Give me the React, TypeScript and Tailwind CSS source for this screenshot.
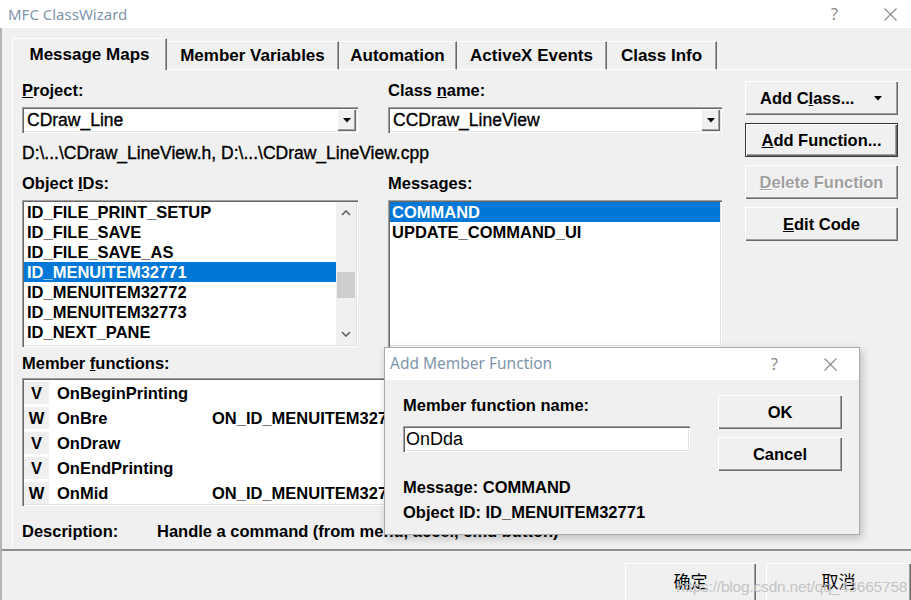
import React from "react";

// classic win32 bevels
const raised =
  "bg-[#f0f0f0] shadow-[inset_1px_1px_0_#ffffff,inset_-1px_-1px_0_#696969,inset_-2px_-2px_0_#a0a0a0]";
const sunken =
  "bg-white shadow-[inset_1px_1px_0_#a0a0a0,inset_2px_2px_0_#696969,inset_-1px_-1px_0_#ffffff,inset_-2px_-2px_0_#e3e3e3]";
const bold = "font-bold text-[16.5px] leading-[20px]";
const med = "text-[17.5px] leading-[20px] [-webkit-text-stroke:0.35px_currentcolor]";

const objectIds = [
  "ID_FILE_PRINT_SETUP",
  "ID_FILE_SAVE",
  "ID_FILE_SAVE_AS",
  "ID_MENUITEM32771",
  "ID_MENUITEM32772",
  "ID_MENUITEM32773",
  "ID_NEXT_PANE",
];

const memberFns = [
  { kind: "V", name: "OnBeginPrinting", map: "" },
  { kind: "W", name: "OnBre", map: "ON_ID_MENUITEM32771:COMMAND" },
  { kind: "V", name: "OnDraw", map: "" },
  { kind: "V", name: "OnEndPrinting", map: "" },
  { kind: "W", name: "OnMid", map: "ON_ID_MENUITEM32772:COMMAND" },
];

const tabs = [
  { label: "Message Maps", w: "w-[155px]" },
  { label: "Member Variables", w: "w-[172px]" },
  { label: "Automation", w: "w-[118px]" },
  { label: "ActiveX Events", w: "w-[150px]" },
  { label: "Class Info", w: "w-[110px]" },
];

const CloseX = ({ color = "#8a8a8a" }: { color?: string }) => (
  <svg width="13" height="13" viewBox="0 0 13 13">
    <path d="M0.5 0.5L12.5 12.5M12.5 0.5L0.5 12.5" stroke={color} strokeWidth="1.1" />
  </svg>
);

const DownTri = () => (
  <svg width="8" height="5" viewBox="0 0 8 5">
    <polygon points="0,0 8,0 4,4.5" fill="#000" />
  </svg>
);

const Combo = ({ value }: { value: string }) => (
  <div className={`${sunken} h-[26px] flex items-center pl-[5px] pr-[2px]`}>
    <span className={`${med} flex-1 text-black`}>{value}</span>
    <div className={`${raised} w-[19px] h-[22px] flex items-center justify-center`}>
      <DownTri />
    </div>
  </div>
);

const Chevron = ({ up }: { up?: boolean }) => (
  <svg width="10" height="6" viewBox="0 0 10 6">
    <polyline
      points={up ? "1,5 5,1 9,5" : "1,1 5,5 9,1"}
      fill="none"
      stroke="#606060"
      strokeWidth="1.6"
    />
  </svg>
);

const Btn = ({
  children,
  def,
  disabled,
  className = "",
}: {
  children: React.ReactNode;
  def?: boolean;
  disabled?: boolean;
  className?: string;
}) => (
  <div
    className={`${raised} ${def ? "border border-[#3a3a3a]" : ""} ${
      disabled ? "text-[#a0a0a0] [text-shadow:1px_1px_0_#ffffff]" : "text-black"
    } ${bold} flex items-center justify-center ${className}`}
  >
    {children}
  </div>
);

const App = () => {
  return (
    <div className="relative w-[911px] h-[600px] overflow-hidden bg-[#f0f0f0] font-['Liberation_Sans','Noto_Sans_CJK_SC',sans-serif] text-black">
      {/* title bar */}
      <div className="h-[28px] bg-white flex items-center pl-[8px] pr-[14px]">
        <span className="font-['Noto_Sans',sans-serif] text-[15px] text-[#7f94ab] flex-1">MFC ClassWizard</span>
        <span className="font-['Noto_Sans',sans-serif] text-[16px] text-[#8a8a8a] mr-[46px]">?</span>
        <CloseX />
      </div>

      <div className="border-l-2 border-[#b4b4b4] h-[572px] flex flex-col">
        {/* tabs + panel */}
        <div className="pl-[10px] border-b-2 border-b-[#8f8f8f]">
          <div className="flex items-end h-[42px] pt-[10px]">
            {tabs.map((t, i) =>
              i === 0 ? (
                <div
                  key={t.label}
                  className={`${t.w} h-[32px] border-l border-t border-white border-r border-r-[#696969] shadow-[inset_-1px_0_0_#a0a0a0] flex items-center justify-center font-bold text-[17px]`}
                >
                  {t.label}
                </div>
              ) : (
                <div
                  key={t.label}
                  className={`${t.w} h-[29px] border-t border-white border-b border-b-white border-r border-r-[#696969] shadow-[inset_-1px_0_0_#a0a0a0] flex items-center justify-center font-bold text-[17px]`}
                >
                  {t.label}
                </div>
              )
            )}
            <div className="flex-1 border-b border-white" />
          </div>

          <div className="h-[479px] border-l border-white pl-[9px] pt-[10px] flex">
            <div className="w-[700px] flex flex-col">
              <div className="grid grid-cols-[336px_334px] gap-x-[30px]">
                <div>
                  <div className={bold}>
                    <u>P</u>roject:
                  </div>
                  <div className="mt-[7px]">
                    <Combo value="CDraw_Line" />
                  </div>
                </div>
                <div>
                  <div className={bold}>
                    Class <u>n</u>ame:
                  </div>
                  <div className="mt-[7px]">
                    <Combo value="CCDraw_LineView" />
                  </div>
                </div>
              </div>

              <div className={`${med} mt-[10px]`}>D:\...\CDraw_LineView.h, D:\...\CDraw_LineView.cpp</div>

              <div className="grid grid-cols-[336px_334px] gap-x-[30px] mt-[10px]">
                <div>
                  <div className={bold}>
                    Object <u>I</u>Ds:
                  </div>
                  <div className={`${sunken} mt-[7px] h-[147px] flex p-[2px]`}>
                    <div className="flex-1 flex flex-col">
                      {objectIds.map((id, i) => (
                        <div
                          key={id}
                          className={`${bold} h-[20px] pl-[3px] ${
                            i === 3 ? "bg-[#0078d7] text-white" : ""
                          }`}
                        >
                          {id}
                        </div>
                      ))}
                    </div>
                    <div className="w-[20px] bg-[#f0f0f0] flex flex-col items-center">
                      <div className="h-[22px] flex items-center justify-center">
                        <Chevron up />
                      </div>
                      <div className="flex-1 w-full flex flex-col px-[1px]">
                        <div className="h-[48px]" />
                        <div className="h-[26px] bg-[#cdcdcd]" />
                      </div>
                      <div className="h-[22px] flex items-center justify-center">
                        <Chevron />
                      </div>
                    </div>
                  </div>
                </div>
                <div>
                  <div className={bold}>Messages:</div>
                  <div className={`${sunken} mt-[7px] h-[147px] p-[2px] flex flex-col`}>
                    <div className={`${bold} h-[20px] pl-[2px] bg-[#0078d7] text-white`}>COMMAND</div>
                    <div className={`${bold} h-[20px] pl-[2px]`}>UPDATE_COMMAND_UI</div>
                  </div>
                </div>
              </div>

              <div className={`${bold} mt-[6px]`}>
                Member <u>f</u>unctions:
              </div>
              <div className={`${sunken} mt-[5px] h-[128px] px-[2px] pt-[2px] flex flex-col`}>
                {memberFns.map((f) => (
                  <div key={f.name} className={`${bold} h-[25px] flex items-center`}>
                    <div className="w-[25px] h-[22px] bg-[#efefef] flex items-center justify-center">{f.kind}</div>
                    <div className="w-[163px] pl-[8px]">{f.name}</div>
                    <div>{f.map}</div>
                  </div>
                ))}
              </div>

              <div className={`${bold} mt-[15px] flex`}>
                <div className="w-[135px]">Description:</div>
                <div>Handle a command (from menu, accel, cmd button)</div>
              </div>
            </div>

            {/* right buttons */}
            <div className="ml-[23px] w-[153px] pt-[1px] flex flex-col gap-[8px]">
              <Btn className="h-[34px] justify-between! pl-[15px] pr-[16px]">
                <span>
                  Add C<u>l</u>ass...
                </span>
                <DownTri />
              </Btn>
              <Btn def className="h-[34px]">
                <span>
                  <u>A</u>dd Function...
                </span>
              </Btn>
              <Btn disabled className="h-[34px]">
                <span>
                  <u>D</u>elete Function
                </span>
              </Btn>
              <Btn className="h-[34px]">
                <span>
                  <u>E</u>dit Code
                </span>
              </Btn>
            </div>
          </div>
        </div>

        {/* bottom buttons */}
        <div className="flex gap-[10px] pl-[623px] pt-[12px]">
          <Btn className="w-[145px] h-[40px] font-normal! text-[17px]!">确定</Btn>
          <Btn className="w-[145px] h-[40px] shrink-0 font-normal! text-[17px]!">取消</Btn>
        </div>
      </div>

      {/* watermark */}
      <div className="absolute left-[676px] top-[575px] text-[15.5px] text-[#c4c4c4] tracking-[-0.2px] pointer-events-none whitespace-nowrap">
        https://blog.csdn.net/qq_43665758
      </div>

      {/* Add Member Function dialog */}
      <div className="absolute left-[384px] top-[347px] w-[476px] h-[188px] border border-[#aaaaaa] bg-[#f0f0f0] shadow-[2px_3px_8px_rgba(0,0,0,0.22)] flex flex-col">
        <div className="h-[32px] bg-white flex items-center pl-[5px] pr-[22px]">
          <span className="font-['Noto_Sans',sans-serif] text-[15.5px] text-[#7f94ab] flex-1">Add Member Function</span>
          <span className="font-['Noto_Sans',sans-serif] text-[16px] text-[#8a8a8a] mr-[46px]">?</span>
          <CloseX />
        </div>
        <div className="flex pl-[18px] pt-[15px]">
          <div className="w-[287px] flex flex-col">
            <div className={bold}>Member function name:</div>
            <div className={`${sunken} mt-[11px] h-[26px] flex items-center pl-[3px]`}>
              <span className="text-[18px] leading-[20px]">OnDda</span>
            </div>
            <div className={`${bold} mt-[25px]`}>Message: COMMAND</div>
            <div className={`${bold} mt-[5px]`}>Object ID: ID_MENUITEM32771</div>
          </div>
          <div className="ml-[28px] w-[124px] flex flex-col gap-[8px]">
            <Btn className="h-[34px]">OK</Btn>
            <Btn className="h-[34px]">Cancel</Btn>
          </div>
        </div>
      </div>
    </div>
  );
};

export default App;
